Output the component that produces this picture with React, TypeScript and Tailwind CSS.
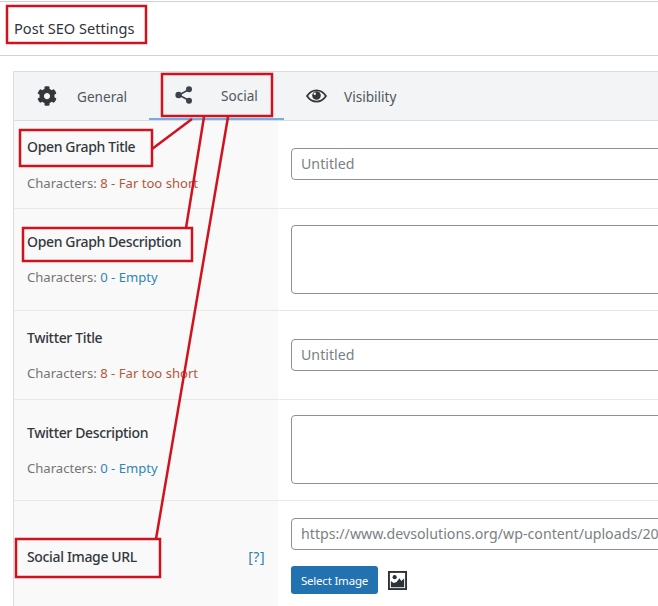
import type { ReactNode } from 'react';
import { FaCog } from 'react-icons/fa';

function Counter({ count, label, tone }: { count: number; label: string; tone: 'short' | 'empty' }) {
  return (
    <p className="whitespace-nowrap text-[13.1px] leading-5 text-[#757575]">
      Characters:{' '}
      <span className={tone === 'short' ? 'text-[#b5563a]' : 'text-[#2f86b5]'}>
        {count} - {label}
      </span>
    </p>
  );
}

function Row({ height, top, gap, title, counter, children }: {
  height: string; top: string; gap: string; title: string; counter: ReactNode; children: ReactNode;
}) {
  return (
    <div className={`flex border-b border-[#e8e8e8] ${height}`}>
      <div className={`w-[264px] shrink-0 bg-[#f9f9f9] px-[13px] ${top}`}>
        <h3 className={`text-[14px] font-medium leading-5 tracking-[-0.35px] text-[#33383d] ${gap}`}>{title}</h3>
        {counter}
      </div>
      {children}
    </div>
  );
}

function Field({ value, className }: { value: string; className: string }) {
  return (
    <div className={`flex h-8 w-[420px] items-center overflow-hidden whitespace-nowrap rounded border border-[#8c8f94] bg-white pl-[9px] text-[14.2px] text-[#7b7f84] ${className}`}>
      {value}
    </div>
  );
}

function Area({ className }: { className: string }) {
  return <div className={`h-[69px] w-[420px] rounded border border-[#8c8f94] bg-white ${className}`} />;
}

export default function App() {
  return (
    <div className="relative h-[606px] w-[658px] overflow-hidden bg-white font-['Noto_Sans','Open_Sans',sans-serif]">
      <div className="mt-px flex h-[55px] items-center border-y border-[#d2d2d2] pb-[1px] pl-[14px]">
        <h2 className="text-[14.6px] leading-5 text-[#2f343a]">Post SEO Settings</h2>
      </div>

      <div className="ml-[13px] mt-[15px] w-[700px] border-l border-t border-[#dcdcde]">
        {/* Tabs */}
        <div className="flex h-[49px] border-b border-[#dcdcde] bg-[#f3f4f5] text-[13.6px] text-[#50575e]">
          <div className="flex w-[135px] items-center pl-[23px]">
            <FaCog size={20} className="text-[#32373c]" />
            <span className="ml-[20px] mt-[2px]">General</span>
          </div>
          <div className="flex h-[48px] w-[135px] items-center border-b-2 border-[#72aee6] pl-[26px]">
            <svg width="18" height="18" viewBox="0 0 18 18" className="text-[#3c434a]">
              <path d="M14 3.5 4 9l10 5.5" fill="none" stroke="currentColor" strokeWidth="1.6" />
              <circle cx="14" cy="3.2" r="3" fill="currentColor" />
              <circle cx="3.6" cy="9" r="3.2" fill="currentColor" />
              <circle cx="14" cy="14.8" r="3" fill="currentColor" />
            </svg>
            <span className="ml-[28px] mt-[2px]">Social</span>
          </div>
          <div className="flex items-center pl-[22px]">
            <svg width="21" height="14" viewBox="0 0 21 14" className="text-[#32373c]">
              <path d="M1 7c2.4-3.6 5.6-5.6 9.5-5.6S17.600 3.400 20 7c-2.400 3.600-5.600 5.600-9.500 5.600S3.400 10.600 1 7z" fill="none" stroke="currentColor" strokeWidth="1.800" />
              <circle cx="10.500" cy="6.500" r="4.300" fill="currentColor" />
              <circle cx="8.800" cy="4.800" r="1.200" fill="#f3f4f5" />
            </svg>
            <span className="ml-[17px] mt-[2px]">Visibility</span>
          </div>
        </div>

        <Row height="h-[88px]" top="pt-[16px]" gap="mb-[16px]" title="Open Graph Title"
          counter={<Counter count={8} label="Far too short" tone="short" />}>
          <Field value="Untitled" className="ml-[13px] mt-[27px]" />
        </Row>
        <Row height="h-[102px]" top="pt-[23px]" gap="mb-[15px]" title="Open Graph Description"
          counter={<Counter count={0} label="Empty" tone="empty" />}>
          <Area className="ml-[13px] mt-[16px]" />
        </Row>
        <Row height="h-[89px]" top="pt-[17px]" gap="mb-[15px]" title="Twitter Title"
          counter={<Counter count={8} label="Far too short" tone="short" />}>
          <Field value="Untitled" className="ml-[13px] mt-[28px]" />
        </Row>
        <Row height="h-[101px]" top="pt-[23px]" gap="mb-[15px]" title="Twitter Description"
          counter={<Counter count={0} label="Empty" tone="empty" />}>
          <Area className="ml-[13px] mt-[15px]" />
        </Row>
        <div className="flex h-[106px]">
          <div className="w-[264px] shrink-0 bg-[#f9f9f9] px-[13px] pt-[45px]">
            <div className="flex items-center justify-between">
              <h3 className="text-[14px] font-medium leading-5 tracking-[-0.35px] text-[#33383d]">Social Image URL</h3>
              <span className="text-[14px] tracking-[0.5px] text-[#2f7fb0]">[?]</span>
            </div>
          </div>
          <div className="ml-[13px] mt-[17px]">
            <Field value="https://www.devsolutions.org/wp-content/uploads/20" className="" />
            <div className="mt-4 flex items-center">
              <button className="h-[28px] w-[87px] rounded-[3px] bg-[#2271b1] pt-[2px] text-[11.5px] tracking-[-0.2px] text-white">Select Image</button>
              <svg width="19" height="19" viewBox="0 0 20 20" className="ml-[10px]">
                <rect x="1" y="1" width="18" height="18" fill="#fff" stroke="#2c3338" strokeWidth="2" />
                <circle cx="7" cy="6.500" r="2.200" fill="#2c3338" />
                <path d="M3 17v-6.500l3 2 3-1 3-4 2 3 3-2.500V17z" fill="#2c3338" />
              </svg>
            </div>
          </div>
        </div>
      </div>

      {/* Red annotations drawn over the screenshot */}
      <svg width="658" height="606" className="pointer-events-none absolute inset-0" fill="none" stroke="#d0121f" strokeWidth="2.500">
        <rect x="7" y="6" width="139" height="37" />
        <rect x="162" y="74" width="110" height="42" />
        <rect x="20" y="130" width="132" height="36" />
        <rect x="23" y="228" width="169" height="33" />
        <rect x="16" y="539" width="144" height="38" />
        <path d="M192 119 152 149" />
        <path d="M204 117 186 228" />
        <path d="M228 117 156 539" />
      </svg>
    </div>
  );
}
